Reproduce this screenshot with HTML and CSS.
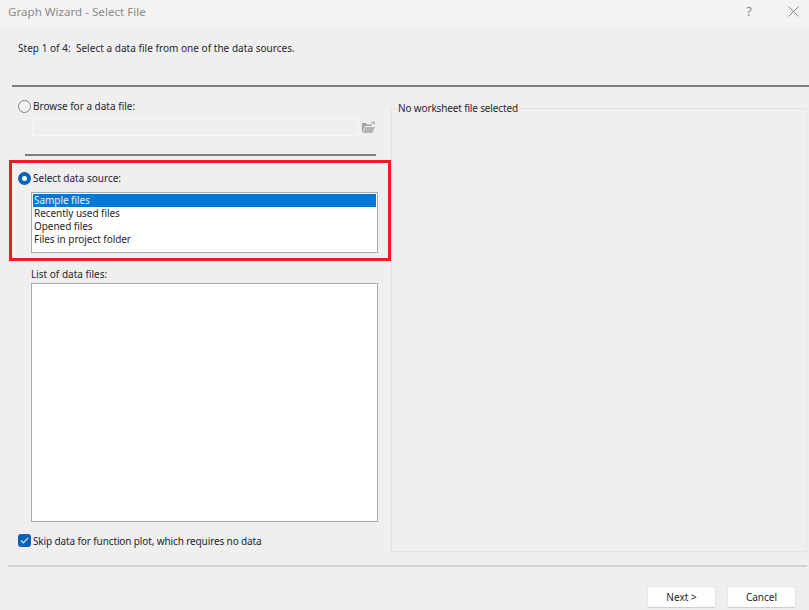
FILE: index.html
```html
<!DOCTYPE html>
<html lang="en">
<head>
<meta charset="utf-8">
<title>Graph Wizard - Select File</title>
<link rel="stylesheet" href="styles.css">
</head>
<body>
<div class="dialog">
  <header class="titlebar">
    <span class="title">Graph Wizard - Select File</span>
    <span class="help">?</span>
    <svg class="close" width="11" height="11" viewBox="0 0 11 11"><path d="M.5.5l10 10M10.5.5l-10 10" stroke="#8a8a8a" stroke-width="1" fill="none"/></svg>
  </header>
  <p class="step">Step 1 of 4:&nbsp; Select a data file from one of the data sources.</p>
  <div class="rule-top"></div>
  <main class="panes">
    <div class="left">
      <label class="option browse"><span class="radio"></span>Browse for a data file:</label>
      <div class="file-row">
        <div class="file-input"></div>
        <svg class="folder" width="14" height="13" viewBox="0 0 14 13"><path d="M1 2h4l1 1.500h5V5H4L1.500 11H1z" fill="#a3a3a3"/><path d="M4.500 6H14l-2.500 6H1.800z" fill="#b5b5b5"/><path d="M10 1.500c1.500-1 2.500-.7 3 .5M13.500 0.800v1.700h-1.700" stroke="#a3a3a3" fill="none"/></svg>
      </div>
      <div class="rule-inner"></div>
      <section class="highlight">
        <label class="option"><span class="radio on"></span>Select data source:</label>
        <ul class="listbox sources">
          <li class="selected">Sample files</li>
          <li>Recently used files</li>
          <li>Opened files</li>
          <li>Files in project folder</li>
        </ul>
      </section>
      <div class="list-label">List of data files:</div>
      <div class="listbox files"></div>
      <label class="option skip">
        <span class="check"><svg width="9" height="7" viewBox="0 0 9 7"><path d="M1 3.500l2.300 2.300L8 1" stroke="#cfe3f7" stroke-width="1.200" fill="none"/></svg></span>Skip data for function plot, which requires no data
      </label>
    </div>
    <fieldset class="preview"><legend>No worksheet file selected</legend></fieldset>
  </main>
  <div class="rule-bottom"></div>
  <footer class="buttons">
    <button class="btn" type="button">Next &gt;</button>
    <button class="btn" type="button">Cancel</button>
  </footer>
</div>
</body>
</html>
```
FILE: styles.css
```css
* { box-sizing: border-box; }
html, body { margin: 0; padding: 0; }
body {
  width: 809px;
  height: 610px;
  overflow: hidden;
  background: #efefef;
  font-family: "Noto Sans", "Open Sans", sans-serif;
  font-size: 10px;
  line-height: 13px;
  color: #26262c;
}
.dialog { display: flex; flex-direction: column; height: 610px; }

.titlebar {
  height: 26px;
  flex: none;
  display: flex;
  align-items: center;
  padding: 0 0 4px 8px;
  background: #f3f3f3;
}
.title { flex: 1; font-size: 11.6px; color: #8b8b8b; }
.help { width: 12px; margin-right: 33px; font-size: 13px; color: #8a8a8a; text-align: center; }
.close { margin-right: 10px; }

.step { margin: 16px 0 0 18px; height: 13px; letter-spacing: 0.03px; }
.rule-top { height: 2px; margin: 30px 0 0 12px; background: #808080; flex: none; }

.panes { display: flex; flex: 1; min-height: 0; }
.left { width: 391px; flex: none; display: flex; flex-direction: column; padding-top: 12px; }

.option { display: flex; align-items: center; height: 15px; cursor: default; }
.browse { margin-left: 18px; }
.radio {
  width: 13px; height: 13px; flex: none; margin-right: 2px;
  border: 1px solid #808080; border-radius: 50%; background: #f3f3f3;
}
.radio.on { border: 4px solid #0a62b8; background: #fff; }

.file-row { display: flex; align-items: center; margin: 4px 0 0 32px; height: 18px; }
.file-input { width: 327px; height: 18px; border: 1px solid #f6f6f6; }
.folder { margin-left: 2px; }
.rule-inner { height: 2px; margin: 18px 15px 0 25px; background: #7d7d7d; flex: none; }

.highlight {
  width: 382px; height: 101px;
  flex: none;
  margin: 4px 0 0 9px;
  padding: 8px 0 0 6px;
  border: 3px solid #ed1c24;
}
.listbox {
  margin: 0; padding: 0; list-style: none;
  background: #fff;
  border: 1px solid #a4abb4;
  box-shadow: inset 0 0 0 1px #fff;
}
.sources { width: 347px; height: 61px; margin: 6px 0 0 13px; padding: 1px; letter-spacing: -0.05px; }
.sources li { height: 13px; padding-left: 1px; line-height: 13px; }
.sources .selected { background: #0078d7; color: #e6f1fb; }

.list-label { margin: 7px 0 0 31px; height: 13px; }
.files { width: 347px; height: 239px; margin: 2px 0 0 31px; flex: none; }
.skip { margin: 12px 0 0 18px; letter-spacing: -0.12px; }
.check {
  width: 13px; height: 13px; flex: none; margin: -2px 2px 0 0;
  display: flex; align-items: center; justify-content: center;
  background: #0a62b8; border-radius: 3px;
}

.preview {
  flex: none;
  width: 416px; height: 450px;
  margin: 15px 0 0 0; padding: 0;
  border: 1px solid #e2e2e2;
}
.preview legend { margin-left: 5px; padding: 0 1px; line-height: 13px; letter-spacing: -0.15px; }

.rule-bottom { height: 2px; margin: 14px 2px 0 8px; background: #d2d2d2; flex: none; }
.buttons { flex: none; display: flex; justify-content: flex-end; gap: 11px; padding: 19px 13px 1px 0; height: 43px; }
.btn {
  width: 69px; height: 22px; padding: 0;
  font: inherit; color: #26262c;
  background: #fdfdfd;
  border: 1px solid #e6e6e6; border-bottom-color: #cfcfcf; border-radius: 3px;
}
```
